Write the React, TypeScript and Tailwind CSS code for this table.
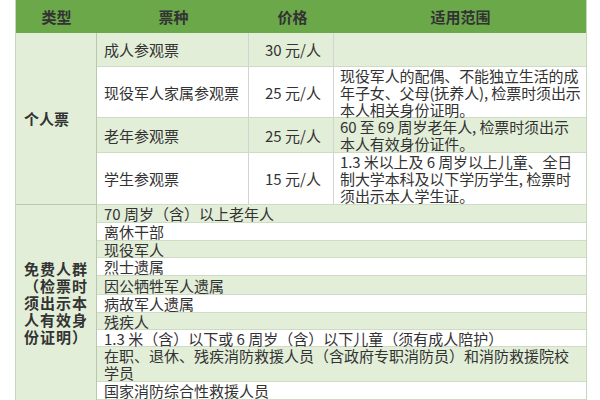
import React from 'react';

const personal = [
  { name: '成人参观票', price: '30 元/人', scope: [] as string[], h: 'h-[34px]', bg: 'bg-[#e2eed8]' },
  {
    name: '现役军人家属参观票',
    price: '25 元/人',
    scope: ['现役军人的配偶、不能独立生活的成', '年子女、父母(抚养人), 检票时须出示', '本人相关身份证明。'],
    h: 'h-[51px]',
    bg: 'bg-white',
  },
  { name: '老年参观票', price: '25 元/人', scope: ['60 至 69 周岁老年人, 检票时须出示', '本人有效身份证件。'], h: 'h-[35px]', bg: 'bg-[#e2eed8]' },
  {
    name: '学生参观票',
    price: '15 元/人',
    scope: ['1.3 米以上及 6 周岁以上儿童、全日', '制大学本科及以下学历学生, 检票时', '须出示本人学生证。'],
    h: 'h-[52px]',
    bg: 'bg-white',
  },
];

const free = [
  { text: ['70 周岁（含）以上老年人'], h: 'h-[18px]' },
  { text: ['离休干部'], h: 'h-[18px]' },
  { text: ['现役军人'], h: 'h-[17px]' },
  { text: ['烈士遗属'], h: 'h-[18px]' },
  { text: ['因公牺牲军人遗属'], h: 'h-[19px]' },
  { text: ['病故军人遗属'], h: 'h-[18px]' },
  { text: ['残疾人'], h: 'h-[17px]' },
  { text: ['1.3 米（含）以下或 6 周岁（含）以下儿童（须有成人陪护）'], h: 'h-[17px]' },
  { text: ['在职、退休、残疾消防救援人员（含政府专职消防员）和消防救援院校', '学员'], h: 'h-[35px]' },
  { text: ['国家消防综合性救援人员'], h: 'h-[18px]' },
];

export default function App() {
  return (
    <div
      className="w-[600px] h-[400px] overflow-hidden bg-white text-[#333] text-[15px] leading-[17px]"
      style={{ fontFamily: '"Noto Sans CJK SC", "Noto Sans", sans-serif' }}
    >
      <div className="ml-[15px] w-[572px] border-x border-[#c5d6b9]">
        {/* header */}
        <div className="flex h-[33px] bg-[#6aa84a] font-bold">
          <div className="w-[81px] flex items-center justify-center">类型</div>
          <div className="w-[153px] flex items-center justify-center">票种</div>
          <div className="w-[85px] flex items-center justify-center">价格</div>
          <div className="flex-1 flex items-center justify-center">适用范围</div>
        </div>

        {/* personal tickets */}
        <div className="flex">
          <div className="w-[81px] shrink-0 flex items-center pl-[8px] font-bold bg-[#e2eed8] border-r border-b border-[#b8c8ad]">
            个人票
          </div>
          <div className="flex-1 flex flex-col">
            {personal.map(r => (
              <div key={r.name} className={`flex ${r.h} ${r.bg} border-b border-[#cfdcc5]`}>
                <div className="w-[152px] flex items-center pl-[7px] border-r border-[#d3d3d3]">{r.name}</div>
                <div className="w-[85px] flex items-center justify-center pl-[4px] border-r border-[#d3d3d3]">{r.price}</div>
                <div className="flex-1 flex flex-col justify-center pl-[6px] whitespace-nowrap tracking-[-0.1px]">
                  {r.scope.map(s => (
                    <div key={s}>{s}</div>
                  ))}
                </div>
              </div>
            ))}
          </div>
        </div>

        {/* free groups */}
        <div className="flex">
          <div className="w-[81px] shrink-0 flex flex-col justify-center pl-[8px] font-bold tracking-[1px] bg-[#e2eed8] border-r border-[#b8c8ad]">
            <div>免费人群</div>
            <div>（检票时</div>
            <div>须出示本</div>
            <div>人有效身</div>
            <div>份证明）</div>
          </div>
          <div className="flex-1 flex flex-col">
            {free.map((r, i) => (
              <div
                key={r.text[0]}
                className={`${r.h} ${i % 2 === 0 ? 'bg-[#e2eed8]' : 'bg-white'} border-b border-[#cfdcc5] flex flex-col justify-center pl-[7px] whitespace-nowrap`}
              >
                {r.text.map(t => (
                  <div key={t}>{t}</div>
                ))}
              </div>
            ))}
          </div>
        </div>
      </div>
    </div>
  );
}
